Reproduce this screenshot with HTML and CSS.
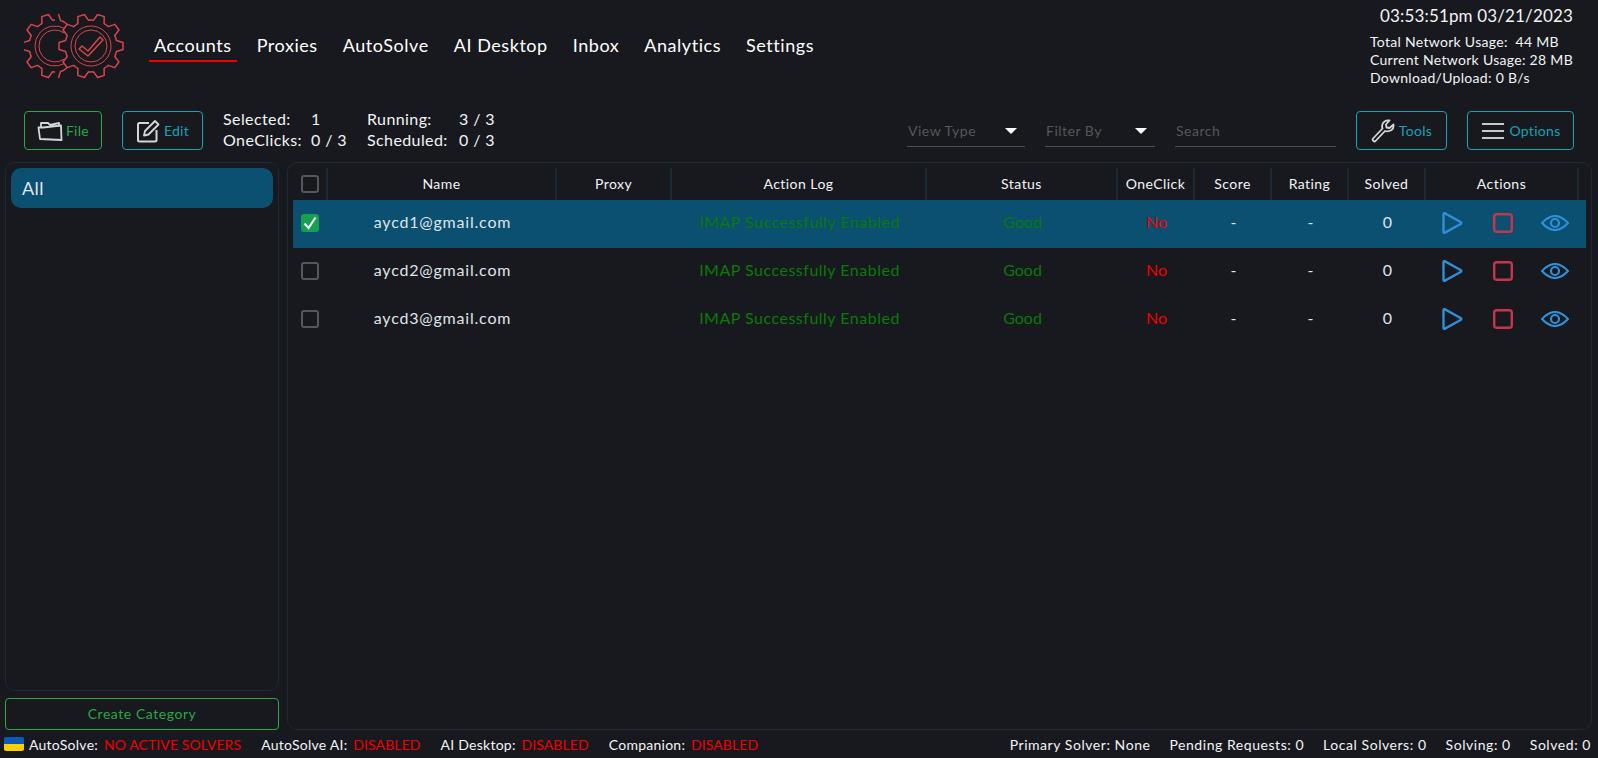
FILE: index.html
```html
<!DOCTYPE html>
<html lang="en">
<head>
<meta charset="utf-8">
<title>Accounts</title>
<link rel="stylesheet" href="styles.css">
</head>
<body>
<svg class="defs" width="0" height="0" aria-hidden="true">
  <defs>
    <path id="tooth" d="M-8-24.7L-5.5-25.4L-3.5-32L3.5-32L5.5-25.4L8-24.7"/>
    <symbol id="i-play" viewBox="0 0 22 24"><path d="M2.5 3.2Q2.5 1.6 4 2.4L19.6 11Q21 12 19.6 13L4 21.6Q2.5 22.4 2.5 20.8Z" fill="none" stroke="currentColor" stroke-width="2.4" stroke-linejoin="round"/></symbol>
    <symbol id="i-stop" viewBox="0 0 20 20"><rect x="1.2" y="1.2" width="17.6" height="17.6" rx="2.5" fill="none" stroke="currentColor" stroke-width="2.4"/></symbol>
    <symbol id="i-eye" viewBox="0 0 28 16"><path d="M1 8Q7.500 1 14 1T27 8Q20.500 15 14 15T1 8Z" fill="none" stroke="currentColor" stroke-width="2.2"/><circle cx="14" cy="8" r="4" fill="none" stroke="currentColor" stroke-width="2.2"/></symbol>
  </defs>
</svg>
<header class="top">
  <svg class="logo" viewBox="0 0 104 70" width="104" height="70" aria-label="Logo">
    <g class="logo-lines">
      <g transform="translate(31 32)">
        <use href="#tooth" transform="rotate(-18)"/>
        <use href="#tooth" transform="rotate(-54)"/>
        <use href="#tooth" transform="rotate(-90)"/>
        <use href="#tooth" transform="rotate(-126)"/>
        <use href="#tooth" transform="rotate(-162)"/>
        <path d="M3.500-32L5.500-25.400L8-24.700L12-22"/>
        <path d="M3.500 32L5.500 25.400L8 24.700L12 22"/>
      </g>
      <g transform="translate(67 32)">
        <use href="#tooth" transform="rotate(18)"/>
        <use href="#tooth" transform="rotate(54)"/>
        <use href="#tooth" transform="rotate(90)"/>
        <use href="#tooth" transform="rotate(126)"/>
        <use href="#tooth" transform="rotate(162)"/>
        <use href="#tooth" transform="rotate(198)"/>
        <use href="#tooth" transform="rotate(234)"/>
        <use href="#tooth" transform="rotate(270)"/>
        <use href="#tooth" transform="rotate(306)"/>
        <use href="#tooth" transform="rotate(342)"/>
      </g>
      <path class="ring" d="M41 14.700A20 20 0 1 0 41 49.300"/>
      <path class="ring" d="M40 18.800A16 16 0 1 0 40 45.200"/>
      <circle class="ring" cx="67" cy="32" r="20"/>
      <circle class="ring" cx="67" cy="32" r="16"/>
      <path d="M55 35L58 32L64 37L76 23L79 26L64 42Z"/>
    </g>
  </svg>
  <nav class="nav">
    <a class="nav-item active">Accounts</a>
    <a class="nav-item">Proxies</a>
    <a class="nav-item">AutoSolve</a>
    <a class="nav-item">AI Desktop</a>
    <a class="nav-item">Inbox</a>
    <a class="nav-item">Analytics</a>
    <a class="nav-item">Settings</a>
  </nav>
  <div class="clock">
    <div class="time">03:53:51pm 03/21/2023</div>
    <div class="net">Total Network Usage:&nbsp; 44 MB</div>
    <div class="net">Current Network Usage: 28 MB</div>
    <div class="net">Download/Upload: 0 B/s</div>
  </div>
</header>

<section class="toolbar">
  <button class="btn btn-green btn-file">
    <svg class="btn-icon" viewBox="0 0 26 22" width="26" height="22"><path d="M3 19L1.500 7.500H6L24 5.500L24.500 20L3 19Z M4 7V3H11L13 5L22 3V5.500" fill="none" stroke="#d6d6d6" stroke-width="1.800" stroke-linejoin="round"/></svg>
    File
  </button>
  <button class="btn btn-teal btn-edit">
    <svg class="btn-icon" viewBox="0 0 24 24" width="24" height="24"><path d="M13 4H3.500Q2 4 2 5.500V21Q2 22.500 3.500 22.500H19Q20.500 22.500 20.500 21V11" fill="none" stroke="#d6d6d6" stroke-width="2"/><path d="M8 16.500L9 12L19 2L22.500 5.500L12.500 15.500Z" fill="none" stroke="#d6d6d6" stroke-width="1.800" stroke-linejoin="round"/></svg>
    Edit
  </button>
  <div class="stats">
    <span>Selected:</span><span>1</span><span>Running:</span><span>3 / 3</span>
    <span>OneClicks:</span><span>0 / 3</span><span>Scheduled:</span><span>0 / 3</span>
  </div>
  <div class="filters">
    <div class="field field-view"><span>View Type</span><i class="caret"></i></div>
    <div class="field field-filter"><span>Filter By</span><i class="caret"></i></div>
    <div class="field field-search"><span>Search</span></div>
  </div>
  <button class="btn btn-teal btn-tools">
    <svg class="btn-icon" viewBox="0 0 24 24" width="24" height="24"><path d="M2 19.500L11.500 9.500Q10 5 13.500 2.500Q16 1 18.500 1.500L15 5.500L15.500 8.500L18.500 9L22.500 5.500Q23 9 20.500 11Q17.500 13 14 12L4.500 22Q3.500 23 2.500 22Q1 20.700 2 19.500Z" fill="none" stroke="#d6d6d6" stroke-width="1.800" stroke-linejoin="round"/></svg>
    Tools
  </button>
  <button class="btn btn-teal btn-options">
    <svg class="btn-icon" viewBox="0 0 22 18" width="22" height="18"><path d="M0 2H22M0 9H22M0 16H22" stroke="#c8c8c8" stroke-width="2.200"/></svg>
    Options
  </button>
</section>

<main class="content">
  <aside class="side">
    <div class="panel side-list">
      <div class="category">All</div>
    </div>
    <button class="create">Create Category</button>
  </aside>
  <section class="panel table">
    <div class="row head">
      <div class="cell"><span class="check"></span></div>
      <div class="cell">Name</div>
      <div class="cell">Proxy</div>
      <div class="cell">Action Log</div>
      <div class="cell">Status</div>
      <div class="cell">OneClick</div>
      <div class="cell">Score</div>
      <div class="cell">Rating</div>
      <div class="cell">Solved</div>
      <div class="cell">Actions</div>
    </div>
    <div class="row data selected">
      <div class="cell"><span class="check on"><svg viewBox="0 0 18 18" width="18" height="18"><path d="M3.500 9.500L7.500 14L14.500 3.500" fill="none" stroke="#fff" stroke-width="2"/></svg></span></div>
      <div class="cell name">aycd1@gmail.com</div>
      <div class="cell"></div>
      <div class="cell ok">IMAP Successfully Enabled</div>
      <div class="cell good">Good</div>
      <div class="cell bad">No</div>
      <div class="cell">-</div>
      <div class="cell">-</div>
      <div class="cell">0</div>
      <div class="cell actions">
        <svg class="a-play"><use href="#i-play"/></svg>
        <svg class="a-stop"><use href="#i-stop"/></svg>
        <svg class="a-eye"><use href="#i-eye"/></svg>
      </div>
    </div>
    <div class="row data">
      <div class="cell"><span class="check"></span></div>
      <div class="cell name">aycd2@gmail.com</div>
      <div class="cell"></div>
      <div class="cell ok">IMAP Successfully Enabled</div>
      <div class="cell good">Good</div>
      <div class="cell bad">No</div>
      <div class="cell">-</div>
      <div class="cell">-</div>
      <div class="cell">0</div>
      <div class="cell actions">
        <svg class="a-play"><use href="#i-play"/></svg>
        <svg class="a-stop"><use href="#i-stop"/></svg>
        <svg class="a-eye"><use href="#i-eye"/></svg>
      </div>
    </div>
    <div class="row data">
      <div class="cell"><span class="check"></span></div>
      <div class="cell name">aycd3@gmail.com</div>
      <div class="cell"></div>
      <div class="cell ok">IMAP Successfully Enabled</div>
      <div class="cell good">Good</div>
      <div class="cell bad">No</div>
      <div class="cell">-</div>
      <div class="cell">-</div>
      <div class="cell">0</div>
      <div class="cell actions">
        <svg class="a-play"><use href="#i-play"/></svg>
        <svg class="a-stop"><use href="#i-stop"/></svg>
        <svg class="a-eye"><use href="#i-eye"/></svg>
      </div>
    </div>
  </section>
</main>

<footer class="status">
  <div class="status-left">
    <span class="flag"></span>
    <span class="st">AutoSolve: <b>NO ACTIVE SOLVERS</b></span>
    <span class="st">AutoSolve AI: <b>DISABLED</b></span>
    <span class="st">AI Desktop: <b>DISABLED</b></span>
    <span class="st">Companion: <b>DISABLED</b></span>
  </div>
  <div class="status-right">
    <span>Primary Solver: None</span>
    <span>Pending Requests: 0</span>
    <span>Local Solvers: 0</span>
    <span>Solving: 0</span>
    <span>Solved: 0</span>
  </div>
</footer>
</body>
</html>
```
FILE: styles.css
```css
* { box-sizing: border-box; }
html, body { height: 100%; }
body {
  margin: 0;
  height: 758px;
  overflow: hidden;
  display: flex;
  flex-direction: column;
  background: #17191e;
  color: #f2f4f5;
  font-family: "Lato", "Noto Sans", sans-serif;
  font-size: 15px;
}
.defs { display: block; height: 0; }

/* Header */
.top {
  height: 111px;
  flex: none;
  display: flex;
  align-items: flex-start;
  padding: 14px 25px 0 24px;
}
.logo { flex: none; }
.logo-lines { fill: none; stroke: #d9454b; stroke-width: 1.5; stroke-linejoin: round; }
.logo-lines use, .logo-lines path { fill: none; }
.ring { stroke-width: 1; }
.nav {
  display: flex;
  gap: 15px;
  margin-left: 21px;
  padding-top: 18px;
}
.nav-item {
  font-size: 18px;
  letter-spacing: 0.55px;
  line-height: 26px;
  height: 30px;
  padding: 0 5px;
  color: #fff;
}
.nav-item.active { border-bottom: 2px solid #f00000; }
.clock { margin-left: auto; margin-top: -9px; }
.time {
  font-size: 17px;
  letter-spacing: 0.15px;
  line-height: 22px;
  text-align: right;
  margin-bottom: 6px;
}
.net { font-size: 14px; letter-spacing: 0.3px; line-height: 18px; }

/* Toolbar */
.toolbar {
  height: 51px;
  flex: none;
  display: flex;
  align-items: flex-start;
  padding: 0 24px;
}
.btn {
  height: 39px;
  background: transparent;
  border: 1px solid;
  border-radius: 4px;
  display: flex;
  align-items: center;
  justify-content: center;
  gap: 3px;
  font: inherit;
  font-size: 14px;
  letter-spacing: 0.3px;
  padding: 0;
}
.btn-green { color: #28a745; border-color: #28a745; }
.btn-teal { color: #17a2b8; border-color: #17a2b8; }
.btn-file { width: 78px; }
.btn-edit { width: 81px; margin-left: 20px; gap: 4px; }
.btn-tools { width: 91px; margin-left: 20px; gap: 4px; }
.btn-options { width: 107px; margin-left: 20px; gap: 5px; padding-left: 2px; }
.stats {
  margin-left: 20px;
  margin-top: -3px;
  display: grid;
  grid-template-columns: 88px 56px 92px auto;
  font-size: 16px;
  letter-spacing: 0.4px;
  line-height: 21px;
}
.filters {
  margin-left: auto;
  display: flex;
  gap: 20px;
}
.field {
  height: 36px;
  border-bottom: 1px solid #4a4c50;
  color: #55575b;
  font-size: 14px;
  letter-spacing: 0.5px;
  display: flex;
  align-items: center;
  justify-content: space-between;
  padding: 4px 7px 0 1px;
}
.field-view { width: 118px; }
.field-filter { width: 110px; }
.field-search { width: 161px; }
.caret {
  width: 0;
  height: 0;
  border-left: 6px solid transparent;
  border-right: 6px solid transparent;
  border-top: 6px solid #fff;
  margin-right: 1px;
}

/* Content */
.content {
  flex: 1;
  min-height: 0;
  display: flex;
  gap: 8px;
  padding: 0 6px 0 5px;
}
.panel {
  border: 1px solid #1b2a35;
  border-radius: 10px;
}
.side {
  width: 274px;
  flex: none;
  display: flex;
  flex-direction: column;
  gap: 7px;
}
.side-list { flex: 1; padding: 5px; }
.category {
  height: 40px;
  background: #0b4f71;
  border-radius: 10px;
  padding-left: 11px;
  display: flex;
  align-items: center;
  font-size: 18px;
  letter-spacing: 0.4px;
  color: #dfe5e8;
}
.create {
  height: 32px;
  background: transparent;
  border: 1px solid #28a745;
  border-radius: 4px;
  color: #28a745;
  font: inherit;
  font-size: 14px;
  letter-spacing: 0.55px;
  padding: 0 0 2px;
}
.table { flex: 1; min-width: 0; padding: 5px; }
.row {
  display: grid;
  grid-template-columns: 35px 229px 115px 255px 191px 77px 77px 77px 77px 153px 8px;
}
.head { height: 32px; font-size: 14px; letter-spacing: 0.45px; }
.head .cell {
  border-right: 2px solid #1b2a35;
  height: 32px;
  padding-bottom: 2px;
}
.data { height: 48px; font-size: 16px; color: #dfe5e8; }
.selected { background: #0b4f71; }
.cell {
  display: flex;
  align-items: center;
  justify-content: center;
  min-width: 0;
}
.data .cell { padding-bottom: 6px; }
.name { letter-spacing: 0.8px; }
.head .cell:first-child { justify-content: flex-start; padding: 0 0 0 8px; }
.data .cell:first-child { justify-content: flex-start; padding: 0 0 2px 8px; }
.check {
  display: block;
  width: 18px;
  height: 18px;
  border: 2px solid #55575b;
  border-radius: 3px;
}
.check.on {
  border: 0;
  background: #16a050;
}
.check svg { display: block; }
.ok { color: #0a7a0a; letter-spacing: 0.5px; }
.good { color: #0a7a0a; }
.bad { color: #f00000; }
.data .actions {
  justify-content: flex-start;
  padding: 0 0 2px 15px;
}
.actions svg { display: block; flex: none; }
.a-play { width: 22px; height: 24px; color: #2f8fd8; }
.a-stop { width: 20px; height: 20px; margin-left: 30px; color: #c9334b; }
.a-eye { width: 28px; height: 16px; margin-left: 28px; color: #2f8fd8; }

/* Footer */
.status {
  height: 28px;
  flex: none;
  display: flex;
  align-items: center;
  justify-content: space-between;
  padding: 0 7px 0 4px;
  font-size: 14px;
  letter-spacing: 0.25px;
}
.status-left, .status-right { display: flex; align-items: center; }
.status-left { gap: 20px; }
.status-right { gap: 19px; letter-spacing: 0.55px; }
.status b { font-weight: 400; color: #f00000; margin-left: 2px; letter-spacing: 0.1px; }
.flag {
  width: 20px;
  height: 14px;
  margin-right: -15px;
  border-radius: 2px;
  background: linear-gradient(#0a5bb5 50%, #fbd000 50%);
}
```
